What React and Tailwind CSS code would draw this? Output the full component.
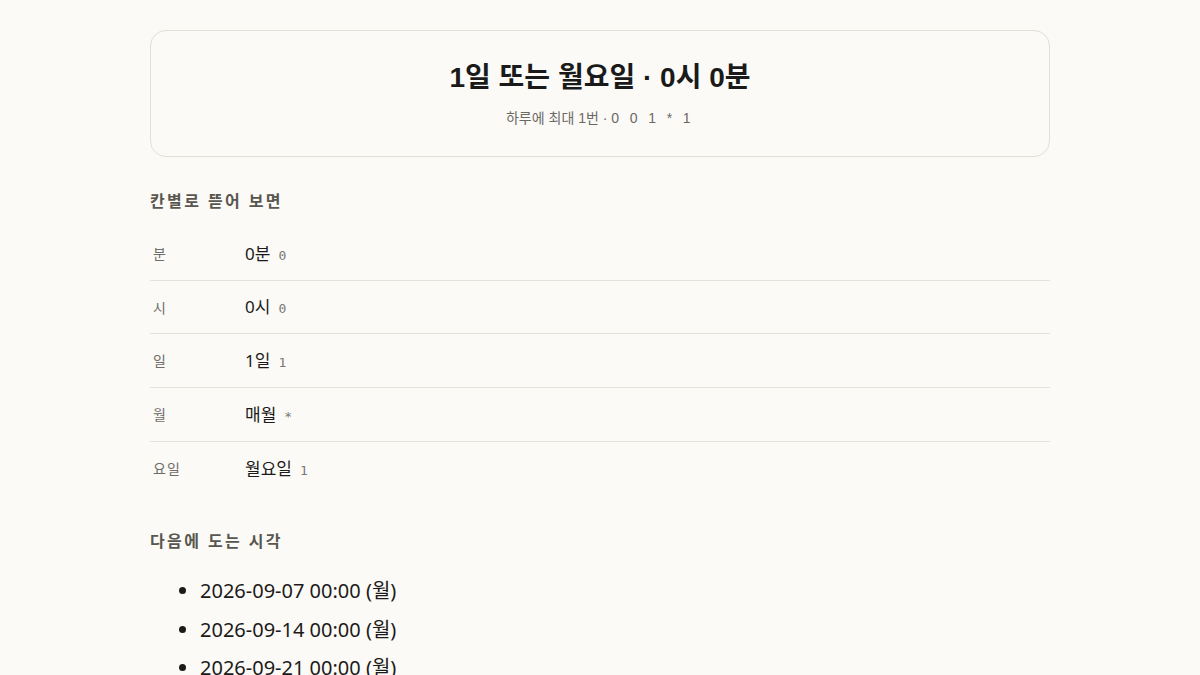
import React from "react";

const FIELDS = [
  { label: "분", value: "0분", raw: "0" },
  { label: "시", value: "0시", raw: "0" },
  { label: "일", value: "1일", raw: "1" },
  { label: "월", value: "매월", raw: "*" },
  { label: "요일", value: "월요일", raw: "1" },
];

const NEXT_RUNS = [
  "2026-09-07 00:00 (월)",
  "2026-09-14 00:00 (월)",
  "2026-09-21 00:00 (월)",
  "2026-10-01 00:00 (목)",
  "2026-10-05 00:00 (월)",
];

const SANS = "font-['Noto_Sans','Noto_Sans_CJK_KR',sans-serif]";
const MONO = "font-['DejaVu_Sans_Mono','Noto_Sans_CJK_KR',monospace]";

export default function App() {
  return (
    <div className={`h-screen overflow-hidden bg-[#fbfaf7] text-[#1c1b19] ${SANS}`}>
      <div className="mx-auto w-[900px] pt-[30px] pb-10">
        <div className="rounded-[16px] border border-[#e2dfd8] pt-[29px] pb-[27px] text-center">
          <h1 className="font-['Liberation_Sans','Noto_Sans_CJK_KR',sans-serif] text-[28px] font-bold leading-[36px] text-[#1a1a1a]">
            1일 또는 월요일 · 0시 0분
          </h1>
          <p className="mt-[11px] font-['Liberation_Sans','Noto_Sans_CJK_KR',sans-serif] text-[14px] leading-[22px] text-[#6b6964]">
            하루에 최대 1번 · <span className="tracking-[3.4px]">0 0 1 * 1</span>
          </p>
        </div>

        <h2 className="mt-[32px] text-[16px] font-bold leading-[24px] tracking-[2.4px] text-[#58564f]">
          칸별로 뜯어 보면
        </h2>
        <div className="mt-[14px]">
          {FIELDS.map((f, i) => (
            <div
              key={f.label}
              className={`flex h-[53.7px] items-center ${i < FIELDS.length - 1 ? "border-b border-[#e4e1da]" : ""}`}
            >
              <div className="w-[95px] pl-[3px] text-[14px] tracking-[1px] text-[#6f6d68]">{f.label}</div>
              <div className="text-[17px] text-[#1c1b19]">
                {f.value}
                <span className={`ml-2 text-[13px] text-[#7a7873] ${MONO}`}>{f.raw}</span>
              </div>
            </div>
          ))}
        </div>

        <h2 className="mt-[34px] text-[16px] font-bold leading-[24px] tracking-[2.4px] text-[#58564f]">
          다음에 도는 시각
        </h2>
        <ul className="mt-[19px] list-disc pl-[50px] text-[20px] leading-[38.5px] text-[#1c1b19]">
          {NEXT_RUNS.map((r) => (
            <li key={r}>{r}</li>
          ))}
        </ul>
      </div>
    </div>
  );
}
